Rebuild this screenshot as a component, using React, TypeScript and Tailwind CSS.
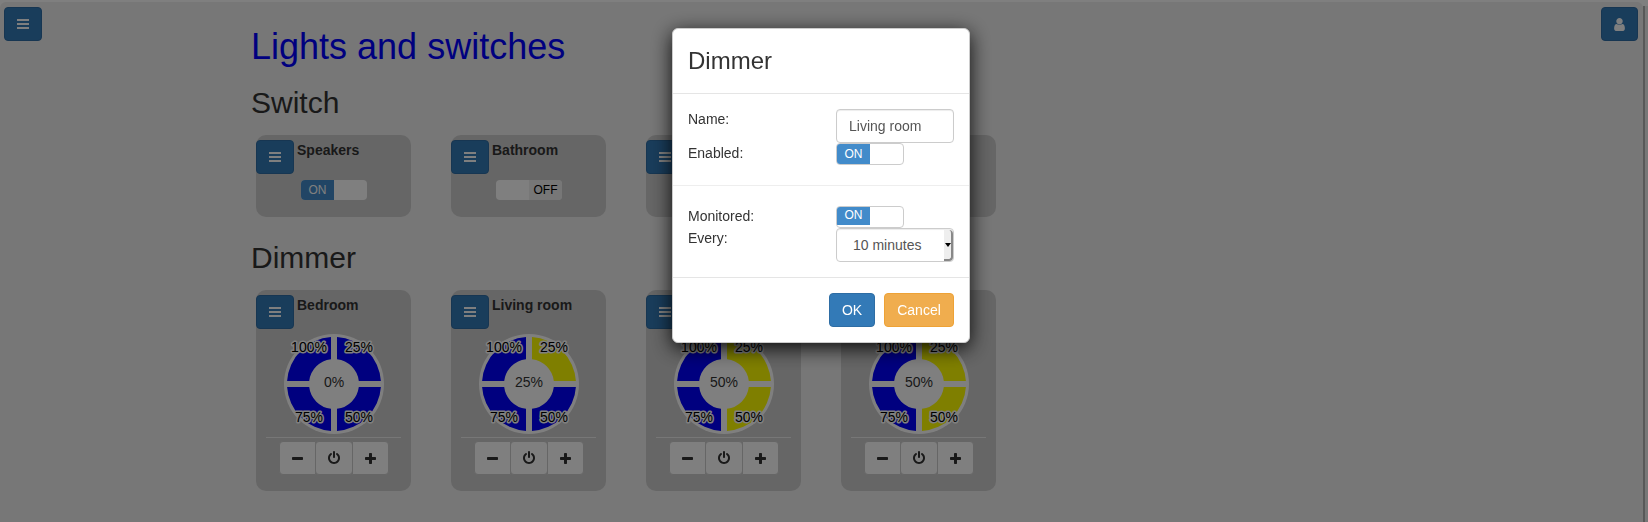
import { useState } from "react";

const FONT = "font-['Liberation_Sans',Arial,sans-serif]";

type SwitchItem = { id: number; name: string; on: boolean };
type DimmerItem = { id: number; name: string; level: number };

const SWITCHES: SwitchItem[] = [
  { id: 1, name: "Speakers", on: true },
  { id: 2, name: "Bathroom", on: false },
  { id: 3, name: "", on: true },
  { id: 4, name: "", on: true },
];

const DIMMERS: DimmerItem[] = [
  { id: 1, name: "Bedroom", level: 0 },
  { id: 2, name: "Living room", level: 25 },
  { id: 3, name: "", level: 50 },
  { id: 4, name: "", level: 50 },
];

function BarsIcon() {
  return (
    <svg width="12" height="10" viewBox="0 0 12 10" fill="currentColor" aria-hidden="true">
      <rect width="12" height="2" />
      <rect y="4" width="12" height="2" />
      <rect y="8" width="12" height="2" />
    </svg>
  );
}

function UserIcon() {
  return (
    <svg width="11" height="15" viewBox="0 0 1280 1792" fill="currentColor" aria-hidden="true">
      <path d="M1280 1399q0 109-62.500 187t-150.500 78h-854q-88 0-150.500-78t-62.500-187q0-85 8.500-160.500t31.500-152 58.500-131 94-89 134.500-34.500q131 128 313 128t313-128q76 0 134.500 34.500t94 89 58.500 131 31.500 152 8.500 160.500zM1024 512q0 159-112.500 271.500t-271.500 112.500-271.500-112.500-112.500-271.500 112.500-271.500 271.500-112.500 271.500 112.500 112.500 271.500z" />
    </svg>
  );
}

function MinusIcon() {
  return (
    <svg width="11" height="11" viewBox="0 0 11 11" fill="currentColor" aria-hidden="true">
      <rect y="4" width="11" height="3" rx="0.700" />
    </svg>
  );
}

function PlusIcon() {
  return (
    <svg width="11" height="11" viewBox="0 0 11 11" fill="currentColor" aria-hidden="true">
      <rect y="4" width="11" height="3" rx="0.700" />
      <rect x="4" width="3" height="11" rx="0.700" />
    </svg>
  );
}

function PowerIcon() {
  return (
    <svg width="14" height="14" viewBox="0 0 1792 1792" fill="currentColor" aria-hidden="true">
      <path d="M1664 896q0 156-61 298t-164 245-245 164-298 61-298-61-245-164-164-245-61-298q0-182 80.500-343t226.500-270q43-32 95.500-25t83.500 50q32 42 24.500 94.500t-49.500 84.500q-98 74-151.500 181t-53.500 228q0 104 40.500 198.500t109.500 163.500 163.500 109.500 198.500 40.500 198.500-40.500 163.500-109.500 109.500-163.500 40.500-198.500q0-121-53.500-228t-151.500-181q-42-32-49.500-84.500t24.500-94.500q31-43 84-50t95 25q146 109 226.500 270t80.500 343zm-640-768v640q0 52-38 90t-90 38-90-38-38-90v-640q0-52 38-90t90-38 90 38 38 90z" />
    </svg>
  );
}

function MenuButton({ label }: { label: string }) {
  return (
    <button
      type="button"
      aria-label={label}
      className="flex h-[34px] w-[38px] shrink-0 items-center justify-center rounded border border-[#2e6da4] bg-[#337ab7] text-white"
    >
      <BarsIcon />
    </button>
  );
}

const TOGGLE_SIZES = {
  plain: "h-5 w-[66px] leading-5",
  outlined: "h-[22px] w-[68px] border border-[#cccccc] leading-5",
  compact: "h-[22px] w-[68px] border border-[#cccccc] pb-0.5 leading-4",
};

function Toggle({
  label,
  initial,
  size = "plain",
}: {
  label: string;
  initial: boolean;
  size?: keyof typeof TOGGLE_SIZES;
}) {
  const [on, setOn] = useState(initial);
  return (
    <button
      type="button"
      role="switch"
      aria-checked={on}
      aria-label={label}
      onClick={() => setOn(!on)}
      className={`flex overflow-hidden rounded bg-white text-xs ${TOGGLE_SIZES[size]}`}
    >
      <span className={`h-full flex-1 text-center ${on ? "bg-[#428bca] text-white" : ""}`}>{on ? "ON" : ""}</span>
      <span className={`h-full flex-1 text-center ${on ? "" : "bg-[#eeeeee] text-black"}`}>{on ? "" : "OFF"}</span>
    </button>
  );
}

function SwitchCard({ item }: { item: SwitchItem }) {
  return (
    <article className="w-[155px] rounded-[10px] bg-[#cccccc] pt-[5px] pb-[17px]">
      <div className="flex gap-[3px]">
        <MenuButton label="Settings" />
        <strong className="text-sm leading-5">{item.name}</strong>
      </div>
      <div className="mt-1.5 flex justify-center pl-px">
        <Toggle label="Power" initial={item.on} />
      </div>
    </article>
  );
}

const SEGMENTS = [
  { value: 25, d: "M53 3.100A47 47 0 0 1 96.900 47H74.800A25 25 0 0 0 53 25.200Z", x: 75, y: 18 },
  { value: 50, d: "M96.900 53A47 47 0 0 1 53 96.900V74.800A25 25 0 0 0 74.800 53Z", x: 75, y: 88 },
  { value: 75, d: "M47 96.900A47 47 0 0 1 3.100 53H25.200A25 25 0 0 0 47 74.800Z", x: 25, y: 88 },
  { value: 100, d: "M3.100 47A47 47 0 0 1 47 3.100V25.200A25 25 0 0 0 25.200 47Z", x: 25, y: 18 },
];

function Dial({ level }: { level: number }) {
  return (
    <svg width="100" height="100" viewBox="0 0 100 100" className="overflow-visible text-sm" textAnchor="middle">
      <circle cx="50" cy="50" r="50" fill="#fff" />
      {SEGMENTS.map((s) => (
        <path key={s.value} d={s.d} fill={level >= s.value ? "#ffff00" : "#0000ff"} />
      ))}
      {SEGMENTS.map((s) => (
        <text
          key={s.value}
          x={s.x}
          y={s.y}
          fill="#000"
          stroke="#fff"
          strokeWidth="3"
          strokeLinejoin="round"
          paintOrder="stroke"
        >
          {s.value}%
        </text>
      ))}
      <text x="50" y="53" fill="#333">
        {level}%
      </text>
    </svg>
  );
}

function DimmerCard({ item }: { item: DimmerItem }) {
  const [level, setLevel] = useState(item.level);
  const button = "flex h-[34px] items-center justify-center border border-[#cccccc] bg-white text-[#333333]";
  return (
    <article className="w-[155px] rounded-[10px] bg-[#cccccc] pt-[5px] pb-4">
      <div className="flex gap-[3px]">
        <MenuButton label="Settings" />
        <strong className="text-sm leading-5">{item.name}</strong>
      </div>
      <div className="mt-[5px] flex justify-center pl-px">
        <Dial level={level} />
      </div>
      <hr className="mx-2.5 my-[3px] border-[#eeeeee]" />
      <div className="flex justify-center pl-px">
        <button
          type="button"
          aria-label="Decrease"
          onClick={() => setLevel(Math.max(0, level - 25))}
          className={`${button} w-[37px] rounded-l`}
        >
          <MinusIcon />
        </button>
        <button
          type="button"
          aria-label="Power"
          onClick={() => setLevel(level ? 0 : 100)}
          className={`${button} -mx-px w-[38px] rounded`}
        >
          <PowerIcon />
        </button>
        <button
          type="button"
          aria-label="Increase"
          onClick={() => setLevel(Math.min(100, level + 25))}
          className={`${button} w-[37px] rounded-r`}
        >
          <PlusIcon />
        </button>
      </div>
    </article>
  );
}

function SettingsDialog() {
  const field = "h-[34px] w-full rounded border border-[#cccccc] bg-white text-sm text-[#555555]";
  return (
    <div className="fixed inset-0 flex items-start justify-center bg-black/50 pt-7 pr-1.5">
      <section
        role="dialog"
        aria-labelledby="dialog-title"
        className="w-[298px] rounded-md border border-[#cccccc] bg-white shadow-[0_5px_20px_rgba(0,0,0,0.9)]"
      >
        <header className="border-b border-[#e5e5e5] px-[15px] py-[19px]">
          <h3 id="dialog-title" className="text-2xl leading-[26px]">
            Dimmer
          </h3>
        </header>
        <div className="p-[15px]">
          <div className="grid grid-cols-[148px_1fr]">
            <label htmlFor="name">Name:</label>
            <input
              id="name"
              type="text"
              defaultValue="Living room"
              className={`${field} px-3 shadow-[inset_0_1px_1px_rgba(0,0,0,0.075)]`}
            />
            <span>Enabled:</span>
            <Toggle label="Enabled" initial size="outlined" />
          </div>
          <hr className="-mx-[15px] my-5 border-[#eeeeee]" />
          <div className="grid grid-cols-[148px_1fr]">
            <span>Monitored:</span>
            <Toggle label="Monitored" initial size="compact" />
            <label htmlFor="every">Every:</label>
            <div className="relative">
              <select
                id="every"
                defaultValue="10"
                className={`${field} appearance-none pl-4 shadow-[inset_0_1px_1px_rgba(0,0,0,0.075)]`}
              >
                <option value="10">10 minutes</option>
                <option value="30">30 minutes</option>
              </select>
              <span className="pointer-events-none absolute top-0.5 right-px bottom-px flex w-[9px] items-center rounded-r-sm border-r-2 border-b-2 border-[#888888] bg-[#eeeeee]">
                <svg width="6" height="4" viewBox="0 0 6 4" className="ml-px" aria-hidden="true">
                  <path d="M0 0H6L3 4Z" fill="#000" />
                </svg>
              </span>
            </div>
          </div>
        </div>
        <footer className="flex justify-end gap-[9px] border-t border-[#e5e5e5] p-[15px]">
          <button type="button" className="h-[34px] w-[46px] rounded border border-[#2e6da4] bg-[#337ab7] text-white">
            OK
          </button>
          <button type="button" className="h-[34px] w-[70px] rounded border border-[#eea236] bg-[#f0ad4e] text-white">
            Cancel
          </button>
        </footer>
      </section>
    </div>
  );
}

export default function App() {
  return (
    <div className={`${FONT} flex min-h-screen bg-white pt-0.5 text-sm leading-5 text-[#333333]`}>
      <div className="flex flex-1 items-start rounded-t-md bg-[#eeeeee] pt-[5px] pr-[5px] pl-1">
        <MenuButton label="Menu" />
        <main className="mx-auto max-w-[1141px] flex-1 pt-5">
          <h1 className="text-4xl leading-10 text-[#0000ff]">Lights and switches</h1>
          <h2 className="mt-[19px] text-3xl leading-[33px]">Switch</h2>
          <div className="mt-4 flex flex-wrap gap-10 px-[5px]">
            {SWITCHES.map((item) => (
              <SwitchCard key={item.id} item={item} />
            ))}
          </div>
          <h2 className="mt-6 text-3xl leading-[33px]">Dimmer</h2>
          <div className="mt-4 flex flex-wrap gap-10 px-[5px]">
            {DIMMERS.map((item) => (
              <DimmerCard key={item.id} item={item} />
            ))}
          </div>
        </main>
        <button
          type="button"
          aria-label="Account"
          className="flex h-[34px] w-[37px] shrink-0 items-center justify-center rounded border border-[#2e6da4] bg-[#337ab7] text-white"
        >
          <UserIcon />
        </button>
      </div>
      <div className="mt-1 w-[5px] border-l-2 border-[#b0b0b0] bg-[#eeeeee]" />
      <SettingsDialog />
    </div>
  );
}
